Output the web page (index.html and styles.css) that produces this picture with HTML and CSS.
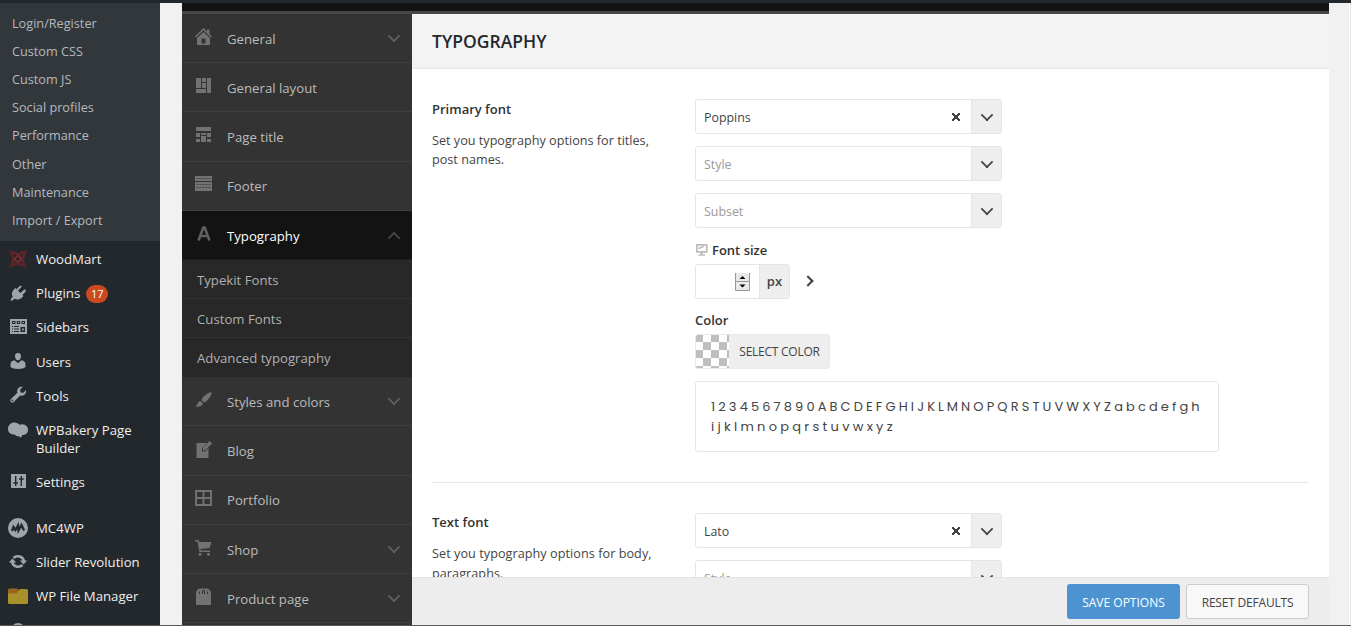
FILE: index.html
```html
<!DOCTYPE html>
<html>
	<head>
		<meta charset="UTF-8">
		<title>Typography</title>
		<link rel="stylesheet" href="styles.css">
	</head>
	<body>
		<div class="adminbar"></div>
		<div class="wrap">
			<div class="adminmenu">
				<ul class="submenu">
					<li><a>Login/Register</a></li>
					<li><a>Custom CSS</a></li>
					<li><a>Custom JS</a></li>
					<li><a>Social profiles</a></li>
					<li><a>Performance</a></li>
					<li><a>Other</a></li>
					<li><a>Maintenance</a></li>
					<li><a>Import / Export</a></li>
				</ul>
				<ul class="menu">
					<li>
						<svg viewBox="0 0 20 20"><g fill="none" stroke="#7d2a2d" stroke-width="1.8"><path d="M3 3c5 0 12 7 14 14M17 3c-5 0-12 7-14 14M3 3c0 5 7 12 14 14M17 3c0 5-7 12-14 14"/><path d="M3 3q7 4 14 0q-4 7 0 14q-7-4-14 0q4-7 0-14z" stroke="#5c2427" stroke-width="2"/></g></svg>
						<a>WoodMart</a>
					</li>
					<li>
						<svg viewBox="0 0 20 20"><path fill="#a0a5aa" d="M13.1 4.4L9.9 7.5l2.6 2.6 3.1-3.2c.6-.5 1.4-.5 1.9 0s.5 1.200 0 1.800L14.400 12l1.100 1.100-1.700 1.700c-2 2-4.900 2.300-7.200 1l-2.200 1.700c-.4.4-1.100.4-1.500 0s-.4-1.100 0-1.500l1.800-2.200C3.400 11.500 3.700 8.700 5.600 6.700L7.300 5l1.200 1.200 3.100-3.200c.5-.5 1.200-.5 1.700 0s.3.900-.2 1.400z"/></svg>
						<a>Plugins</a> <span class="count">17</span>
					</li>
					<li>
						<svg viewBox="0 0 20 20"><path fill="#a0a5aa" d="M2 2h17v15H2z"/><path fill="#23282d" d="M4 4h3.500v3H4zM8.700 4h3.500v3H8.700zM13.500 4H17v3h-3.500z"/><path fill="#a0a5aa" d="M5 5h1.500v1H5zM9.700 5h1.500v1H9.700zM14.500 5H16v1h-1.500z"/><path fill="#23282d" d="M4 9h1v1H4zM6 9h5v1H6zM4 11.500h1v1H4zM6 11.500h5v1H6zM4 14h1v1H4zM6 14h5v1H6zM12.500 10H17v5h-4.500z"/><path fill="#a0a5aa" d="M14 11.500h1.700v2H14z"/></svg>
						<a>Sidebars</a>
					</li>
					<li>
						<svg viewBox="0 0 20 20"><path fill="#a0a5aa" d="M10 8.300c-1.700 0-3-1.800-3-4.300 0-1.900 1.200-3 3-3s3 1.100 3 3c0 2.500-1.300 4.300-3 4.300zM2.500 15v-2.500c0-2.400 1.500-4 4-4.200l3.500 3 3.500-3c2.500.2 4 1.800 4 4.200V15c-1 1.300-4 2-7.500 2s-6.500-.7-7.500-2z"/></svg>
						<a>Users</a>
					</li>
					<li>
						<svg viewBox="0 0 20 20"><path fill="#a0a5aa" d="M16.700 8.600c-1.300 1.200-3 1.500-4.600 1l-6.300 6.400c-.8.800-2.100.8-2.900 0s-.8-2.100 0-2.900l6.500-6.300c-.6-1.600-.2-3.400 1.100-4.700C11.600 1 13.300.6 14.800 1L12.200 3.600l.3 2.800 2.900.3 2.500-2.600c.4 1.500.1 3.300-1.200 4.500zM5.100 15c.4-.4.4-1 0-1.300s-.9-.4-1.300 0-.4 1 0 1.300.9.400 1.300 0z"/></svg>
						<a>Tools</a>
					</li>
					<li class="two">
						<svg viewBox="0 0 20 20"><path fill="#a0a5aa" d="M0 9C0 5 3 2.500 6.500 2.500c2.500 0 4 1 5 2.300C13 4 15 4 16.700 4.700 19 5.700 20 7.500 20 9.700c0 3.300-2.500 5.300-5.700 5.300l-1.300 2.800-2.600-1.800C9 16.500 7.500 16 7 14.500 3 14.800 0 12.500 0 9z"/></svg>
						<a>WPBakery Page<br>Builder</a>
					</li>
					<li>
						<svg viewBox="0 0 20 20"><path fill="#a0a5aa" d="M3 2h15v14H3z"/><path fill="#23282d" d="M7 4h1.400v6.200h1.600v1.500H8.400V14H7v-2.300H5.400v-1.500H7zM12.600 14V7.800H11V6.300h1.600V4H14v2.300h1.700v1.500H14V14z"/></svg>
						<a>Settings</a>
					</li>
					<li class="sep"></li>
					<li>
						<svg viewBox="0 0 20 20"><circle cx="10" cy="10" r="10" fill="#a0a5aa"/><path fill="none" stroke="#23282d" stroke-width="2.300" d="M4 13l1.500-4L7.500 12l2.500-4.500.5 5L13.500 7l2.500 5.500"/></svg>
						<a>MC4WP</a>
					</li>
					<li>
						<svg viewBox="0 0 20 20"><path fill="none" stroke="#a0a5aa" stroke-width="2.600" d="M5.500 6A6 5.500 0 0 1 15.800 9M14.500 13A6 5.500 0 0 1 4.200 10"/><path fill="#a0a5aa" d="M.8 10.500h7.400L4.500 6.500zM19.200 8.500h-7.400l3.700 4z"/></svg>
						<a>Slider Revolution</a>
					</li>
					<li>
						<svg viewBox="0 0 20 20"><path fill="#9b641f" d="M0 4q0-1.500 1.500-1.500H9L12 5v4H0z"/><path fill="#a8902a" d="M0 7.500h8.500L12 3h6.500Q20 3 20 4.500v12q0 1.500-1.500 1.500h-17Q0 18 0 16.500z"/></svg>
						<a>WP File Manager</a>
					</li>
					<li>
						<svg viewBox="0 0 20 20"><circle cx="10" cy="10" r="7" fill="#a0a5aa"/></svg>
					</li>
				</ul>
			</div>

			<div class="options">
				<div class="options-top"></div>
				<div class="options-body">
					<ul class="sections">
						<li class="has-sub">
							<svg viewBox="0 0 17 17"><path fill="#727272" d="M8.500 0L12 3.500V1.500h2.500V6L17 8.500l-1 1-7.500-7.300L1 9.500l-1-1z"/><path fill="#727272" fill-rule="evenodd" d="M8.500 4l6.500 6v7H2v-7zM6.500 10.500v5h4v-5z"/></svg>
							<a>General</a>
						</li>
						<li>
							<svg viewBox="0 0 17 17"><path fill="#727272" d="M1 0h5v10H1zM7 0h4v4H7zM7 5h4v5H7zM12 0h4v15h-4zM1 11h10v4H1z"/></svg>
							<a>General layout</a>
						</li>
						<li>
							<svg viewBox="0 0 17 17"><path fill="#727272" d="M1 0h15v4H1zM1 6h4v4H1zM6 6h5v2H6zM12 6h4v4h-4zM6 9h5v6H6zM1 12h4v3H1zM12 12h4v3h-4z"/></svg>
							<a>Page title</a>
						</li>
						<li>
							<svg viewBox="0 0 17 17"><path fill="#727272" d="M0 0h17v15H0z"/><path stroke="#333" fill="none" d="M0 5.500h17"/><path stroke="#444" fill="none" stroke-dasharray="2 1" d="M1.500 2.500h14M1.500 8.500h14M1.500 11.500h14"/></svg>
							<a>Footer</a>
						</li>
						<li class="has-sub active">
							<svg viewBox="0 0 17 17"><path fill="none" stroke="#606060" stroke-width="2.600" d="M3.500 15.500L8.300 2.500h1.400l4.800 13M5.500 11h7"/></svg>
							<a>Typography</a>
						</li>
						<li class="sub"><a>Typekit Fonts</a></li>
						<li class="sub"><a>Custom Fonts</a></li>
						<li class="sub last"><a>Advanced typography</a></li>
						<li class="has-sub">
							<svg viewBox="0 0 17 17"><path fill="#727272" d="M16.500.5C17 2 14 7 11 9.500l-2 1L6.500 8l.8-2C10 3 15-.5 16.500.5zM5.500 9L8 11.500C7 14.500 3.500 15 .5 14.500c2-.8 1.700-5 5-5.500z"/></svg>
							<a>Styles and colors</a>
						</li>
						<li>
							<svg viewBox="0 0 17 17"><path fill="#727272" d="M1.500 2H12L7 7.500V10.500h3L13.500 7v10h-12z"/><path fill="#727272" d="M14.500 0L17 2.500 10 9.500H8V7z"/></svg>
							<a>Blog</a>
						</li>
						<li>
							<svg viewBox="0 0 17 17"><path fill="none" stroke="#727272" stroke-width="1.900" d="M1 1h15v14H1zM8.500 1v14M1 8h15"/></svg>
							<a>Portfolio</a>
						</li>
						<li class="has-sub">
							<svg viewBox="0 0 17 17"><path fill="#727272" d="M0 1h3.800l.6 2H16.500L14.500 9l-9 1 .3 1.500H15V13H4.500L2.500 2.500H0z"/><circle cx="5" cy="15.200" r="1.500" fill="#727272"/><circle cx="13.500" cy="15.200" r="1.500" fill="#727272"/></svg>
							<a>Shop</a>
						</li>
						<li class="has-sub">
							<svg viewBox="0 0 17 17"><path fill="#727272" d="M1 17V6q0-5.500 5-5.500h5q5 0 5 5.500v11z"/><path fill="none" stroke="#333" d="M4.500 6V3.500M7.500 6V3q0-1 1-1t1 1v3M12.500 6V3.500"/></svg>
							<a>Product page</a>
						</li>
						<li></li>
					</ul>

					<div class="content">
						<div class="content-head"><h2>TYPOGRAPHY</h2></div>
						<div class="fields">
							<div class="field">
								<div class="field-info">
									<h4>Primary font</h4>
									<p>Set you typography options for titles,<br>post names.</p>
								</div>
								<div class="field-control">
									<div class="select"><span>Poppins</span><b class="clear"></b><i></i></div>
									<div class="select empty"><span>Style</span><i></i></div>
									<div class="select empty"><span>Subset</span><i></i></div>
									<label class="size-label">
										<svg viewBox="0 0 13 12"><path fill="none" stroke="#bcbcbc" stroke-width="1.700" d="M1.800.800h10v7h-10zM3.500 4.500l5-2"/><path fill="#bcbcbc" d="M5.500 8H8v2H5.500zM3.500 10.200h6.500v1.500H3.500z"/></svg>
										<span>Font size</span>
									</label>
									<div class="size-row">
										<div class="size">
											<div class="size-input">
												<svg viewBox="0 0 15 18"><path fill="#e9e9e9" d="M0 0h15v18H0z"/><path fill="none" stroke="#999" d="M.5 0v17.500h14V0M0 8.500h15"/><path d="M4.500 6h6l-3-3zM4.500 11.500h6l-3 3z"/></svg>
											</div>
											<span>px</span>
										</div>
										<em></em>
									</div>
									<label class="color-label">Color</label>
									<div class="color"><div class="swatch"></div><span>SELECT COLOR</span></div>
									<div class="sample"><p class="line-a">1 2 3 4 5 6 7 8 9 0 A B C D E F G H I J K L M N O P Q R S T U V W X Y Z a b c d e f g h</p><p class="line-b">i j k l m n o p q r s t u v w x y z</p></div>
								</div>
							</div>
							<div class="field second">
								<div class="field-info">
									<h4>Text font</h4>
									<p>Set you typography options for body,<br>paragraphs.</p>
								</div>
								<div class="field-control">
									<div class="select"><span>Lato</span><b class="clear"></b><i></i></div>
									<div class="select empty"><span>Style</span><i></i></div>
								</div>
							</div>
						</div>
						<div class="actions">
							<button class="save">SAVE OPTIONS</button>
							<button class="reset">RESET DEFAULTS</button>
						</div>
					</div>
				</div>
			</div>
			<div class="scroll"></div>
		</div>
		<div class="bottom"></div>
	</body>
</html>
```
FILE: styles.css
```css
*{
	margin: 0;
	padding: 0;
	box-sizing: border-box;
}
body{
	height: 626px;
	overflow: hidden;
	display: flex;
	flex-direction: column;
	background: #f1f1f1;
	font-family: "Open Sans", "Noto Sans", sans-serif;
	font-size: 13px;
	color: #444;
}
ul{list-style: none;}
svg{display: block; flex: none;}

.adminbar{height: 3px; flex: none; background: #23282d;}
.bottom{height: 1px; flex: none; background: #5a5a5a;}
.wrap{display: flex; height: 622px; overflow: hidden;}

/* wordpress menu */
.adminmenu{width: 160px; flex: none; background: #23282d; overflow: hidden;}
.submenu{height: 238px; padding: 5.6px 12px 0; background: #32373c;}
.submenu li{height: 28.2px; line-height: 28.2px; font-size: 12.7px; color: #b4b9be;}
.menu{padding-top: 2px;}
.menu li{height: 34.2px; display: flex; padding: 7px 0 0 8px; line-height: 18px; font-size: 13.2px; color: #eee; white-space: nowrap;}
.menu li.two{height: 52.2px;}
.menu li.sep{height: 11.3px;}
.menu svg{width: 20px; height: 20px; margin-right: 8px; margin-top: -1px;}
.count{
	width: 22px;
	height: 18px;
	margin: 1px 0 0 6px;
	border-radius: 9px;
	background: #ca4a1f;
	color: #fff;
	font-size: 11px;
	text-align: center;
	line-height: 17px;
}

.options{width: 1147px; margin-left: 22px; flex: none;}
.options-top{height: 11px; background: #131313; border-bottom: 3px solid #474747;}
.options-body{display: flex; height: 611px;}

/* sections */
.sections{width: 230px; height: 611px; overflow: hidden; background: #333; flex: none;}
.sections li{
	height: 49.2px;
	padding: 1.6px 12px 0 13px;
	display: flex;
	align-items: center;
	border-bottom: 1px solid #3e3e3e;
	font-size: 13.2px;
	color: #bbb;
}
.sections svg{width: 17px; height: 17px; margin: -4px 15px 0 0;}
.has-sub:after{
	content: "";
	width: 8px;
	height: 8px;
	margin: -6px 2px 0 auto;
	border: solid #606060;
	border-width: 0 2px 2px 0;
	transform: translateX(1px) rotate(45deg) scale(.88);
}
.sections li.active{background: #131313; color: #fff; border-color: #1d1d1d;}
.active:after{transform: translateX(1px) rotate(225deg) scale(.88); margin-top: 4px; border-color: #484848;}
.sections li.sub{height: 39.1px; padding: 2px 15px 0; background: #282828; border-color: #333; color: #b0b0b0;}
.sections li.last{border-color: #282828;}

/* content */
.content{width: 917px; height: 611px; display: flex; flex-direction: column; background: #fff;}
.content-head{height: 55px; flex: none; padding: 0 20px; background: #f3f3f3; border-bottom: 1px solid #e6e6e6;}
.content-head h2{font-size: 17.5px; font-weight: 600; line-height: 55px; color: #23282d;}
.fields{height: 508px; flex: none; padding: 0 20px; overflow: hidden;}
.field{display: flex; padding: 30px 0; border-bottom: 1px solid #e6e6e6;}
.field-info{width: 263px; flex: none;}
.field-info h4{font-size: 13px; font-weight: 600; line-height: 20px; color: #333;}
.field-info p{font-size: 12.65px; line-height: 19px; margin-top: 12px;}
.second h4{line-height: 18px;}
.second p{line-height: 20px; letter-spacing: 0.05px;}
.field-control{width: 524px;}
.select{
	width: 307px;
	height: 35px;
	margin-bottom: 12px;
	display: flex;
	align-items: center;
	border: 1px solid #e5e5e5;
	border-radius: 3px;
	font-size: 12.4px;
	overflow: hidden;
}
.select span{flex: 1; padding: 2px 8px 0;}
.empty span{color: #999;}
.select i{width: 30px; height: 33px; display: flex; justify-content: center; align-items: center; background: #eee; border-left: 1px solid #e5e5e5;}
.select i:after{
	content: "";
	width: 8px;
	height: 8px;
	margin-top: -3px;
	margin-left: 1px;
	border: solid #444;
	border-width: 0 2px 2px 0;
	transform: rotate(45deg) scale(.88);
}
.clear{width: 8px; height: 8px; margin-right: 11px; background: linear-gradient(45deg, transparent 40%, #444 40%, #444 60%, transparent 60%), linear-gradient(-45deg, transparent 40%, #444 40%, #444 60%, transparent 60%);}
.size-label{display: flex; align-items: center; height: 20px; margin-top: 12px; font-weight: 600; font-size: 13px; color: #333;}
.size-label svg{width: 13px; height: 12px; margin-right: 4px;}
.size-row{display: flex; align-items: center; margin-top: 4px;}
.size{width: 95px; height: 35px; display: flex; border: 1px solid #e5e5e5; border-radius: 3px; overflow: hidden;}
.size-input{width: 63px; padding: 8px 0 0 39px;}
.size-input svg{width: 15px; height: 18px;}
.size span{flex: 1; background: #eee; border-left: 1px solid #e5e5e5; text-align: center; line-height: 33px; font-weight: 600;}
.size-row em{width: 8px; height: 8px; margin-left: 14px; margin-top: -2px; border: solid #444; border-width: 2px 2px 0 0; transform: rotate(45deg);}
.color-label{display: block; margin-top: 11px; line-height: 20px; font-size: 13px; font-weight: 600; color: #333;}
.color{width: 135px; height: 35px; margin-top: 4px; display: flex; border: 1px solid #e9e9e9; border-radius: 3px; background: #eee; overflow: hidden;}
.swatch{width: 33px; height: 33px; background: repeating-conic-gradient(#fff 0 25%, #bfbfbf 0 50%) 7px 7px / 16px 16px;}
.color span{flex: 1; padding-left: 1px; text-align: center; line-height: 34px; font-size: 12px; font-weight: 500; letter-spacing: -0.25px;}
.sample{
	height: 71px;
	margin-top: 12px;
	padding: 15px 14px 15px 15px;
	border: 1px solid #e5e5e5;
	border-radius: 3px;
	font-family: Poppins, Inter, sans-serif;
	font-feature-settings: "cv11";
	font-size: 13px;
	font-weight: 400;
	line-height: 20px;
	white-space: nowrap;
}
.line-a{letter-spacing: -0.18px;}
.line-b{letter-spacing: -0.1px;}

.actions{height: 48px; flex: none; padding: 6px 20px 0; display: flex; justify-content: flex-end; background: #ededed; border-top: 1px solid #e3e3e3;}
.actions button{height: 35px; padding-top: 2px; border-radius: 3px; font-family: inherit; font-size: 12px; font-weight: 500; letter-spacing: -0.2px;}
.actions .save{width: 113px; margin-right: 6px; border: 0; background: #4d93d2; color: #fff; letter-spacing: 0;}
.reset{width: 123px; border: 1px solid #ccc; background: #f8f8f8; color: #444;}
.scroll{width: 2px; margin-left: auto; border-left: 1px solid #fff; background: #e9e9e9;}
```
